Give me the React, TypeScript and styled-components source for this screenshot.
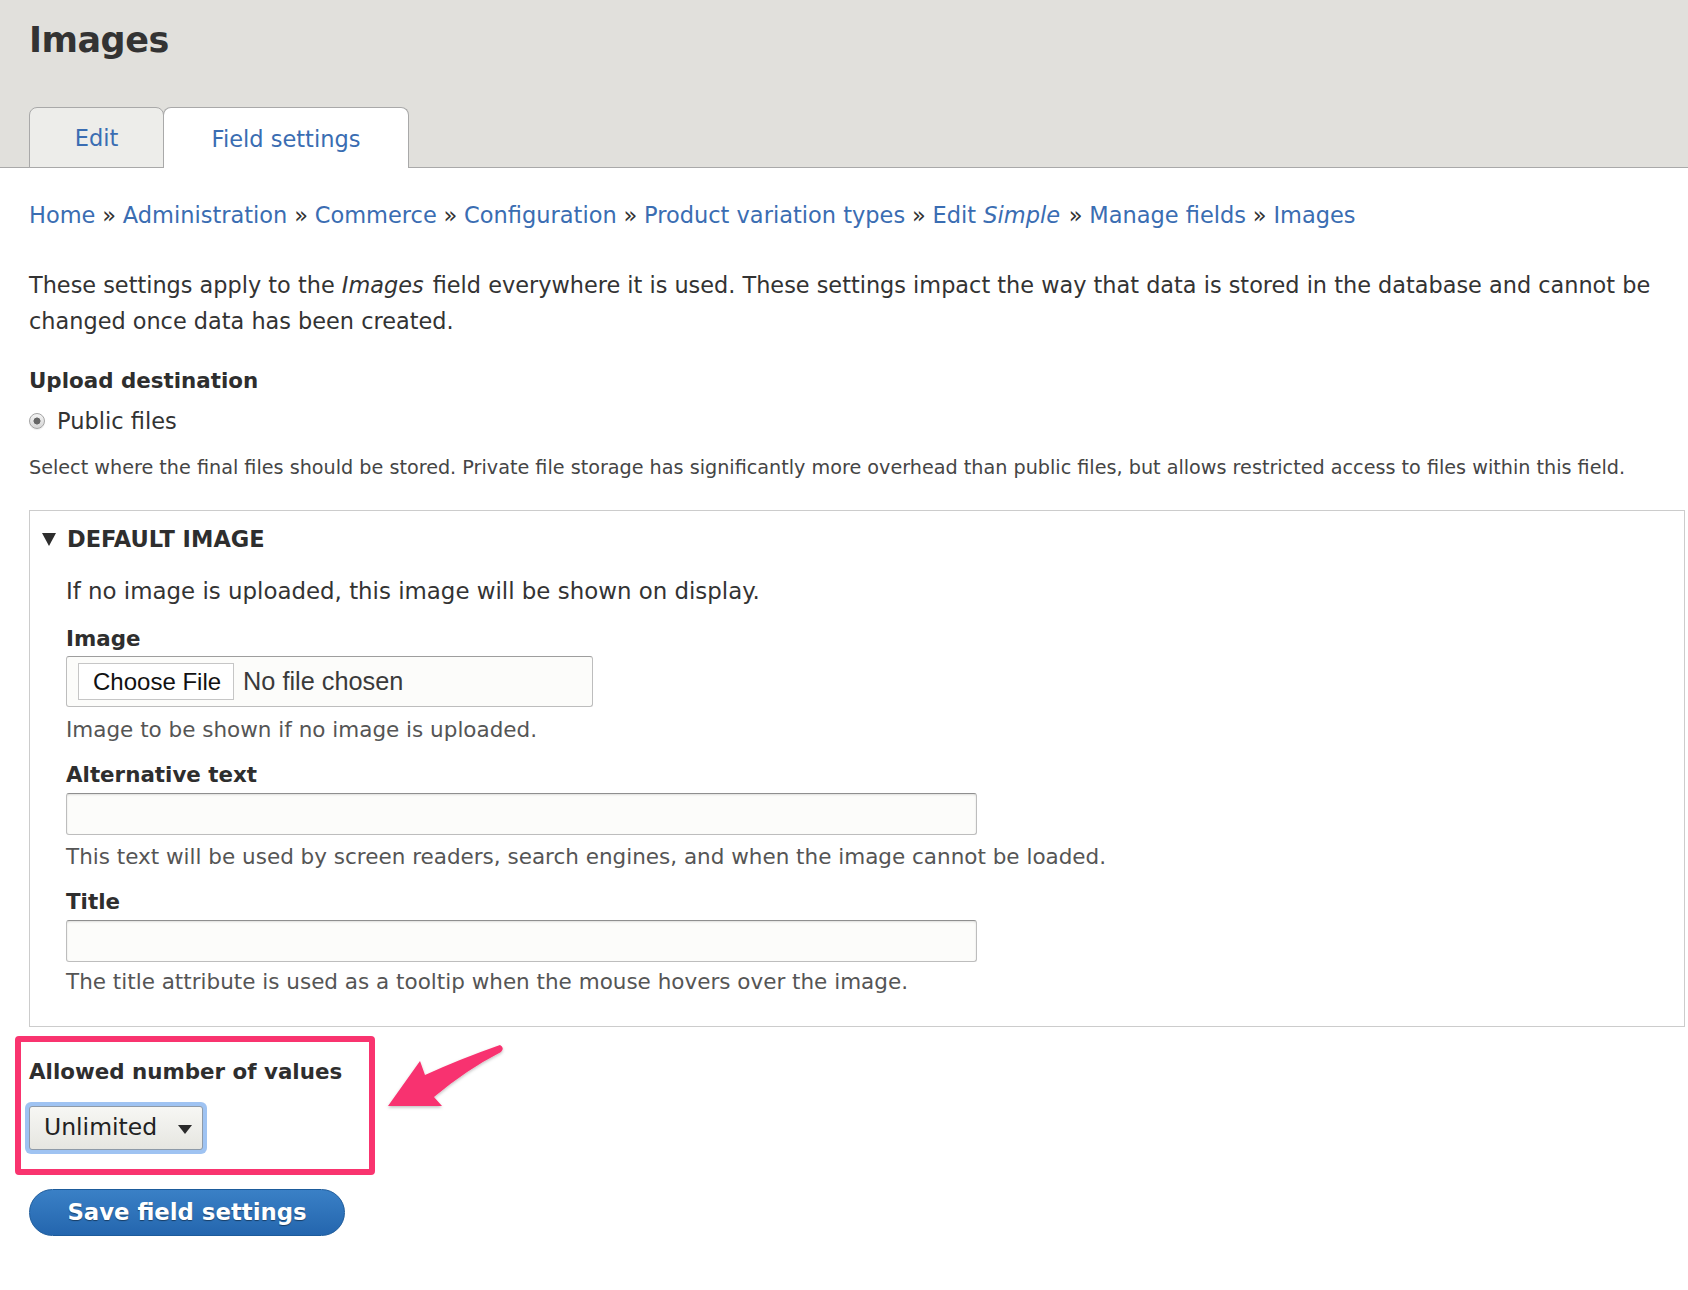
import React from "react";
import styled, { createGlobalStyle } from "styled-components";

const GlobalStyle = createGlobalStyle`
  html, body { margin: 0; padding: 0; background: #ffffff; }
  body { font-family: "DejaVu Sans", "Liberation Sans", sans-serif; color: #333333; }
  * { box-sizing: border-box; }
`;

const Header = styled.header`
  background: #e1e0dc;
  border-bottom: 1px solid #a9a9a9;
  padding: 17px 0 0 29px;
`;

const PageTitle = styled.h1`
  margin: 0;
  font: bold 35px/46px "DejaVu Sans", sans-serif;
  letter-spacing: -0.5px;
  color: #333333;
`;

const Tabs = styled.nav`
  display: flex;
  align-items: flex-end;
  margin-top: 44px;
  margin-bottom: -1px;
`;

const Tab = styled.a<{ $active?: boolean; $width: number }>`
  display: flex;
  align-items: center;
  justify-content: center;
  width: ${(p) => p.$width}px;
  height: 61px;
  border: 1px solid #a9a9a9;
  border-bottom: ${(p) => (p.$active ? "none" : "1px solid #a9a9a9")};
  margin-left: ${(p) => (p.$active ? "-1px" : "0")};
  border-radius: 8px 8px 0 0;
  background: ${(p) => (p.$active ? "#ffffff" : "#ededea")};
  font: 22.5px/1 "DejaVu Sans", sans-serif;
  color: #3a6db2;
  text-decoration: none;
  padding-top: 2px;
`;

const Main = styled.main`
  padding: 0 3px 0 29px;
  display: flex;
  flex-direction: column;
  align-items: flex-start;
`;

const Breadcrumb = styled.nav`
  margin-top: 32px;
  font: 22.5px/30px "DejaVu Sans", sans-serif;
  color: #333333;
`;

const Crumb = styled.a`
  color: #3a6db2;
  text-decoration: none;
`;

const Sep = styled.span`
  margin: 0 0.3em;
`;

const Em = styled.em`
  padding-right: 2px;
`;

const Intro = styled.p`
  margin: 37px 0 0;
  font: 22.4px/36px "DejaVu Sans", sans-serif;
  color: #333333;
`;

const Label = styled.div<{ $mt: number }>`
  margin-top: ${(p) => p.$mt}px;
  font: bold 21.4px/30px "DejaVu Sans", sans-serif;
  color: #2e2e2e;
`;

const RadioRow = styled.label`
  margin-top: 10px;
  display: flex;
  align-items: center;
  gap: 12px;
  font: 22.5px/30px "DejaVu Sans", sans-serif;
  color: #333333;
`;

const RadioDot = styled.span`
  width: 16px;
  height: 16px;
  border-radius: 50%;
  border: 1px solid #a4a4a4;
  background: radial-gradient(circle at center, #666666 0 3.2px, transparent 3.8px),
    linear-gradient(#f4f4f4, #d6d6d6);
  box-shadow: 0 1px 1px rgba(0, 0, 0, 0.08);
  flex: none;
`;

const Description = styled.div<{ $mt: number; $small?: boolean }>`
  margin-top: ${(p) => p.$mt}px;
  font: ${(p) => (p.$small ? "19.2px/28px" : "21.5px/28px")} "DejaVu Sans", sans-serif;
  color: ${(p) => (p.$small ? "#454545" : "#555555")};
`;

const Details = styled.section`
  margin-top: 28px;
  align-self: stretch;
  border: 1px solid #cccccc;
  padding: 13px 0 30px 0;
`;

const Summary = styled.div`
  display: flex;
  align-items: center;
  gap: 11px;
  padding-left: 12px;
  font: bold 22.5px/30px "DejaVu Sans", sans-serif;
  color: #2e2e2e;
  text-transform: uppercase;
`;

const Triangle = styled.span`
  width: 0;
  height: 0;
  border-left: 7px solid transparent;
  border-right: 7px solid transparent;
  border-top: 13px solid #2e2e2e;
  margin-top: 1px;
`;

const DetailsBody = styled.div`
  padding-left: 36px;
  display: flex;
  flex-direction: column;
  align-items: flex-start;
`;

const BodyText = styled.div`
  margin-top: 22px;
  font: 22.9px/30px "DejaVu Sans", sans-serif;
  color: #333333;
`;

const FileBox = styled.div`
  margin-top: 2px;
  width: 527px;
  height: 51px;
  display: flex;
  align-items: center;
  gap: 9px;
  padding-left: 11px;
  background: #fcfcfa;
  border: 1px solid #bdbdbd;
  border-top-color: #9e9e9e;
  border-radius: 3px;
`;

const ChooseButton = styled.span`
  display: flex;
  align-items: center;
  height: 37px;
  padding: 0 12px 0 14px;
  background: #ffffff;
  border: 1px solid #c6c6c6;
  font: 24px/1 "Liberation Sans", Arial, sans-serif;
  color: #111111;
`;

const NoFile = styled.span`
  font: 25.3px/1 "Liberation Sans", Arial, sans-serif;
  color: #3a3a3a;
`;

const TextInput = styled.input`
  margin-top: 3px;
  width: 911px;
  height: 42px;
  background: #fcfcfa;
  border: 1px solid #bdbdbd;
  border-top-color: #8f8f8f;
  border-radius: 3px;
  box-shadow: inset 0 1px 2px rgba(0, 0, 0, 0.12);
  font: 21px "DejaVu Sans", sans-serif;
  outline: none;
`;

const Highlight = styled.div`
  position: relative;
  margin-top: 9px;
  margin-left: -14px;
  width: 360px;
  height: 139px;
  border: 6px solid #f9346f;
  border-radius: 4px;
  padding: 7px 0 0 8px;
`;

const SelectGlow = styled.div`
  margin-top: 15px;
  margin-left: -4px;
  width: 182px;
  padding: 4px;
  border-radius: 6px;
  background: #9fc3f2;
`;

const SelectBox = styled.div`
  height: 44px;
  display: flex;
  align-items: center;
  justify-content: space-between;
  padding: 0 10px 0 14px;
  border: 1px solid #8e9aa8;
  border-radius: 3px;
  background: linear-gradient(#f7f7f4, #e6e6e1);
  font: 23.5px/1 "DejaVu Sans", sans-serif;
  color: #222222;
`;

const SelectArrow = styled.span`
  width: 0;
  height: 0;
  border-left: 7.5px solid transparent;
  border-right: 7.5px solid transparent;
  border-top: 9px solid #2a2a2a;
  margin-top: 2px;
`;

const ArrowMark = styled.svg`
  position: absolute;
  left: 349px;
  top: -13px;
  overflow: visible;
`;

const SaveButton = styled.button`
  margin-top: 14px;
  width: 316px;
  height: 47px;
  border-radius: 24px;
  border: 1px solid #1d5b9b;
  background: linear-gradient(#3a80c6, #2466ae);
  color: #ffffff;
  font: bold 22.8px/1 "DejaVu Sans", sans-serif;
  text-shadow: 0 1px 1px rgba(0, 0, 0, 0.45);
  padding: 0;
  cursor: pointer;
`;

const Spacer = styled.div`
  height: 53px;
`;

const crumbs = [
  { label: "Home" },
  { label: "Administration" },
  { label: "Commerce" },
  { label: "Configuration" },
  { label: "Product variation types" },
  { label: "Edit", em: "Simple" },
  { label: "Manage fields" },
  { label: "Images" },
];

export default function App() {
  return (
    <>
      <GlobalStyle />
      <Header>
        <PageTitle>Images</PageTitle>
        <Tabs>
          <Tab href="#" $width={135}>Edit</Tab>
          <Tab href="#" $active $width={246}>Field settings</Tab>
        </Tabs>
      </Header>
      <Main>
        <Breadcrumb>
          {crumbs.map((c, i) => (
            <React.Fragment key={i}>
              {i > 0 && <Sep>»</Sep>}
              <Crumb href="#">
                {c.label}
                {c.em && (
                  <>
                    {" "}
                    <Em>{c.em}</Em>
                  </>
                )}
              </Crumb>
            </React.Fragment>
          ))}
        </Breadcrumb>
        <Intro>
          These settings apply to the <Em>Images</Em> field everywhere it is used. These settings impact the way that data is stored in the database and cannot be changed once data has been created.
        </Intro>

        <Label $mt={27}>Upload destination</Label>
        <RadioRow>
          <RadioDot />
          Public files
        </RadioRow>
        <Description $mt={18} $small>
          Select where the final files should be stored. Private file storage has significantly more overhead than public files, but allows restricted access to files within this field.
        </Description>

        <Details>
          <Summary>
            <Triangle />
            Default image
          </Summary>
          <DetailsBody>
            <BodyText>If no image is uploaded, this image will be shown on display.</BodyText>
            <Label $mt={18}>Image</Label>
            <FileBox>
              <ChooseButton>Choose File</ChooseButton>
              <NoFile>No file chosen</NoFile>
            </FileBox>
            <Description $mt={9}>Image to be shown if no image is uploaded.</Description>
            <Label $mt={16}>Alternative text</Label>
            <TextInput type="text" />
            <Description $mt={8}>
              This text will be used by screen readers, search engines, and when the image cannot be loaded.
            </Description>
            <Label $mt={16}>Title</Label>
            <TextInput type="text" />
            <Description $mt={6}>
              The title attribute is used as a tooltip when the mouse hovers over the image.
            </Description>
          </DetailsBody>
        </Details>

        <Highlight>
          <Label $mt={8}>Allowed number of values</Label>
          <SelectGlow>
            <SelectBox>
              Unlimited
              <SelectArrow />
            </SelectBox>
          </SelectGlow>
          <ArrowMark width="160" height="110" viewBox="0 0 160 110">
            <defs>
              <filter id="arrowShadow" x="-20%" y="-20%" width="140%" height="140%">
                <feDropShadow dx="0" dy="1.5" stdDeviation="1.5" floodColor="#000" floodOpacity="0.25" />
              </filter>
            </defs>
            <path
              d="M18 77 L72 77 L64 68 Q96 41 131 23 Q135 19 130 16 Q90 30 55 46 L50 32 Z"
              fill="#f8336f"
              filter="url(#arrowShadow)"
            />
          </ArrowMark>
        </Highlight>

        <SaveButton>Save field settings</SaveButton>
        <Spacer />
      </Main>
    </>
  );
}
